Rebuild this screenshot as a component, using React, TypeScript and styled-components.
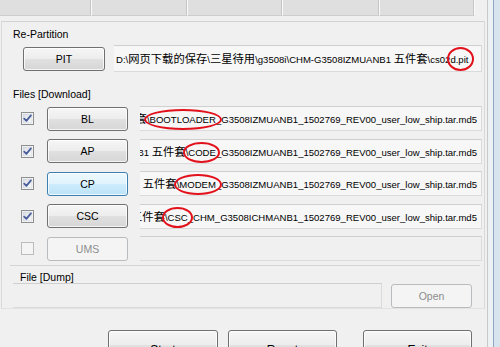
import React from "react";
import styled, { createGlobalStyle, css } from "styled-components";

const GlobalStyle = createGlobalStyle`
  html, body {
    margin: 0;
    padding: 0;
    background: #f0f0f0;
  }
  body {
    font-family: "Liberation Sans", "Noto Sans CJK SC", sans-serif;
    font-size: 10px;
    color: #000;
  }
  #root {
    width: 500px;
    height: 347px;
    overflow: hidden;
  }
`;

const Window = styled.div`
  display: flex;
  width: 500px;
  height: 347px;
  overflow: hidden;
  background: #f0f0f0;
`;

const Main = styled.div`
  flex: 0 0 487px;
  display: flex;
  flex-direction: column;
`;

const Frame = styled.div`
  flex: 1;
  border-left: 1px solid #c9c9c9;
  background: linear-gradient(
    90deg,
    #eef1f4 0,
    #eef1f4 5px,
    #8ea6bf 5px,
    #8ea6bf 6px,
    #d7e3ee 6px
  );
`;

const TabStrip = styled.div`
  display: flex;
  height: 17px;
`;

const Tab = styled.div<{ $w: number }>`
  box-sizing: border-box;
  width: ${p => p.$w}px;
  height: 16px;
  background: #dfdfdf;
  border-right: 1px solid #fafafa;
  box-shadow: inset -1px 0 #c6c6c6;
  border-bottom: 1px solid #cdcdcd;
`;

const TabPage = styled.div`
  margin: 5px 2px 0 1px;
  height: 290px;
  border-top: 1px solid #d2d2d2;
  border-left: 1px solid #d9d9d9;
  border-right: 1px solid #d9d9d9;
  border-bottom: 1px solid #e2e2e2;
  display: flex;
  flex-direction: column;
`;

const SectionLabel = styled.div<{ $top: number; $left?: number }>`
  margin-top: ${p => p.$top}px;
  padding-left: ${p => p.$left ?? 11}px;
  height: 12px;
  line-height: 12px;
  font-size: 10.5px;
`;

const PitRow = styled.div`
  display: flex;
  align-items: center;
  margin-top: 5px;
  padding-left: 21px;
  gap: 7px;
  height: 27px;
`;

const Button = styled.div<{ $w: number; $h?: number; $focus?: boolean; $disabled?: boolean }>`
  box-sizing: border-box;
  flex: 0 0 ${p => p.$w}px;
  width: ${p => p.$w}px;
  height: ${p => p.$h ?? 24}px;
  display: flex;
  align-items: center;
  justify-content: center;
  border: 1px solid #707070;
  border-radius: 3px;
  background: linear-gradient(#f6f6f6 0%, #ededed 48%, #e0e0e0 52%, #d6d6d6 100%);
  box-shadow: inset 0 0 0 1px rgba(255, 255, 255, 0.75);
  font-size: 10.5px;
  color: #000;
  ${p =>
    p.$focus &&
    css`
      border-color: #3c7fb1;
      background: linear-gradient(#eef8fe 0%, #e1f3fd 48%, #cdecfd 52%, #bde2f6 100%);
    `}
  ${p =>
    p.$disabled &&
    css`
      border-color: #b9bcbe;
      background: #f4f4f4;
      box-shadow: none;
      color: #8d8d8d;
    `}
`;

const Field = styled.div<{ $w: number; $left?: boolean; $empty?: boolean }>`
  box-sizing: border-box;
  flex: 0 0 ${p => p.$w}px;
  width: ${p => p.$w}px;
  height: ${p => (p.$left ? 27 : 25)}px;
  display: flex;
  align-items: flex-start;
  justify-content: ${p => (p.$left ? "flex-start" : "flex-end")};
  padding: ${p => (p.$left ? "6px 6px 0 3px" : "5px 4px 0 3px")};
  overflow: visible;
  clip-path: inset(-12px 0 -12px 2px);
  white-space: nowrap;
  background: ${p => (p.$empty ? "#f0f0f0" : "#f7f7f7")};
  border: 1px solid #dadada;
  border-top-color: #cfcfcf;
  font-size: 9.55px;
  line-height: 12px;
`;

const FieldText = styled.span`
  flex-shrink: 0;
`;

const Cjk = styled.span`
  font-family: "Noto Sans CJK SC", sans-serif;
  font-size: 11.3px;
`;

const Mark = styled.span<{ $l?: number; $r?: number; $t?: number; $b?: number }>`
  position: relative;
  &::after {
    content: "";
    position: absolute;
    left: ${p => -(p.$l ?? 4)}px;
    right: ${p => -(p.$r ?? 6)}px;
    top: ${p => -(p.$t ?? 5)}px;
    bottom: ${p => -(p.$b ?? 5)}px;
    border: 2px solid #e2121c;
    border-radius: 50%;
  }
`;

const FileList = styled.div`
  margin-top: 6px;
  display: flex;
  flex-direction: column;
  gap: 7.5px;
`;

const FileRow = styled.div`
  display: flex;
  align-items: center;
  height: 25px;
  padding-left: 19px;
`;

const CheckWrap = styled.div`
  width: 13px;
  height: 13px;
  margin-right: 13px;
  display: flex;
`;

const Spacer = styled.div<{ $w: number }>`
  flex: 0 0 ${p => p.$w}px;
`;

const DumpGroup = styled.div`
  margin: 4px 4px 0 8px;
  border-top: 1px solid #d4d4d4;
`;

const DumpRow = styled.div`
  display: flex;
  align-items: center;
  gap: 9px;
  padding-left: 1px;
  height: 25px;
`;

const Separator = styled.div`
  margin: 7px 7px 0 0;
  height: 1px;
  background: #cfcfcf;
  box-shadow: 0 1px 0 #fdfdfd;
`;

const ButtonBar = styled.div`
  display: flex;
  margin-top: 14px;
  padding-left: 108px;
`;

const BigButton = styled(Button)`
  font-size: 12px;
  align-items: flex-start;
  padding-top: 12px;
`;

const CheckBox = ({ checked, disabled }: { checked?: boolean; disabled?: boolean }) => (
  <CheckWrap>
    <svg width="13" height="13" viewBox="0 0 13 13">
      <defs>
        <linearGradient id="cbg" x1="0" y1="0" x2="1" y2="1">
          <stop offset="0" stopColor="#d9dde3" />
          <stop offset="1" stopColor="#fbfbfb" />
        </linearGradient>
      </defs>
      <rect
        x="0.5"
        y="0.5"
        width="12"
        height="12"
        fill={disabled ? "#f4f4f4" : "#fff"}
        stroke={disabled ? "#bcbcbc" : "#8e8f8f"}
      />
      {!disabled && <rect x="2" y="2" width="9" height="9" fill="url(#cbg)" stroke="#c2c8d2" strokeWidth="0.6" />}
      {checked && (
        <path
          d="M3.2 6.6 L5.4 8.9 L9.9 3.4"
          fill="none"
          stroke="#4a5f9c"
          strokeWidth="1.8"
          strokeLinecap="round"
          strokeLinejoin="round"
        />
      )}
    </svg>
  </CheckWrap>
);

// wraps runs of Chinese characters so they get the wider CJK face
const renderPath = (s: string) =>
  s.split(/([\u4e00-\u9fff]+)/).map((part, i) =>
    /[\u4e00-\u9fff]/.test(part) ? <Cjk key={i}>{part}</Cjk> : <React.Fragment key={i}>{part}</React.Fragment>,
  );

interface FileEntry {
  label: string;
  checked: boolean;
  head?: string;
  mark?: string;
  rest?: string;
  focus?: boolean;
  disabled?: boolean;
  ring?: { l: number; r: number };
}

const files: FileEntry[] = [
  {
    label: "BL",
    checked: true,
    head: "套",
    mark: "\\BOOTLOADER",
    rest: "_G3508IZMUANB1_1502769_REV00_user_low_ship.tar.md5",
    ring: { l: 3, r: 6 },
  },
  {
    label: "AP",
    checked: true,
    head: "NB1 五件套",
    mark: "\\CODE",
    rest: "_G3508IZMUANB1_1502769_REV00_user_low_ship.tar.md5",
    ring: { l: 3, r: 4 },
  },
  {
    label: "CP",
    checked: true,
    focus: true,
    head: "1 五件套",
    mark: "\\MODEM",
    rest: "_G3508IZMUANB1_1502769_REV00_user_low_ship.tar.md5",
    ring: { l: 3, r: 6 },
  },
  {
    label: "CSC",
    checked: true,
    head: "五件套",
    mark: "\\CSC",
    rest: "_CHM_G3508ICHMANB1_1502769_REV00_user_low_ship.tar.md5",
    ring: { l: 3, r: 5 },
  },
  { label: "UMS", checked: false, disabled: true },
];

const tabs = [92, 96, 95, 97, 95];

export default function App() {
  return (
    <>
      <GlobalStyle />
      <Window>
        <Main>
          <TabStrip>
            {tabs.map((w, i) => (
              <Tab key={i} $w={w} />
            ))}
          </TabStrip>
          <TabPage>
            <SectionLabel $top={6}>Re-Partition</SectionLabel>
            <PitRow>
              <Button $w={82}>PIT</Button>
              <Field $w={370} $left>
                <FieldText>
                  {renderPath("D:\\网页下载的保存\\三星待用\\g3508i\\CHM-G3508IZMUANB1 五件套\\cs02")}
                  <Mark $l={3} $r={6} $t={7} $b={6}>
                    d.pit
                  </Mark>
                </FieldText>
              </Field>
            </PitRow>
            <SectionLabel $top={16}>Files [Download]</SectionLabel>
            <FileList>
              {files.map(f => (
                <FileRow key={f.label}>
                  <CheckBox checked={f.checked} disabled={f.disabled} />
                  <Button $w={81} $focus={f.focus} $disabled={f.disabled}>
                    {f.label}
                  </Button>
                  <Spacer $w={10} />
                  <Field $w={344} $empty={f.disabled}>
                    {f.mark && (
                      <FieldText>
                        {renderPath(f.head ?? "")}
                        <Mark $l={f.ring?.l} $r={f.ring?.r}>
                          {f.mark}
                        </Mark>
                        {f.rest}
                      </FieldText>
                    )}
                  </Field>
                </FileRow>
              ))}
            </FileList>
            <DumpGroup>
              <SectionLabel $top={5} $left={10}>
                File [Dump]
              </SectionLabel>
              <DumpRow>
                <Field $w={371} $empty />
                <Button $w={81} $disabled>
                  Open
                </Button>
              </DumpRow>
            </DumpGroup>
          </TabPage>
          <Separator />
          <ButtonBar>
            <BigButton $w={110} $h={30}>
              Start
            </BigButton>
            <Spacer $w={10} />
            <BigButton $w={109} $h={30}>
              Reset
            </BigButton>
            <Spacer $w={26} />
            <BigButton $w={109} $h={30}>
              Exit
            </BigButton>
          </ButtonBar>
        </Main>
        <Frame />
      </Window>
    </>
  );
}
